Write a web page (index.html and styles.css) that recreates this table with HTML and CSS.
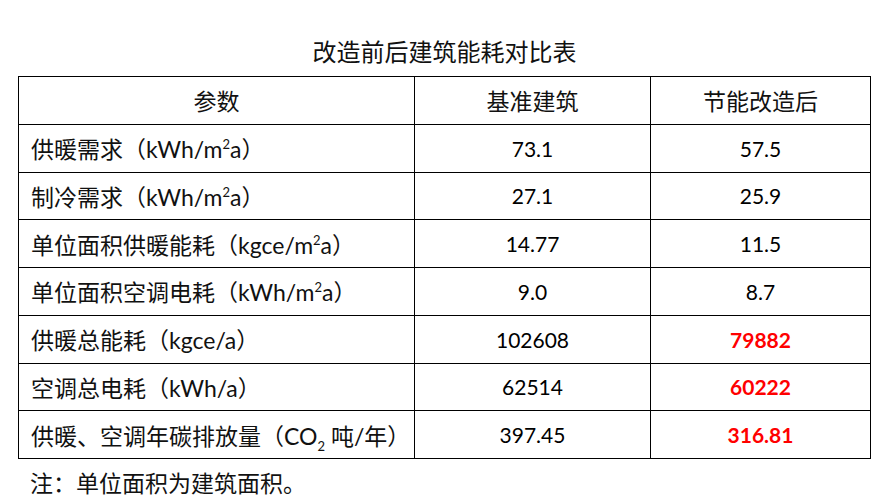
FILE: index.html
```html
<!DOCTYPE html>
<html>
<head>
  <meta charset="utf-8">
  <title>改造前后建筑能耗对比表</title>
  <link rel="stylesheet" href="styles.css">
</head>
<body>
  <div class="sheet">
    <div class="caption">改造前后建筑能耗对比表</div>
    <table class="energy">
      <colgroup>
        <col class="c-param">
        <col class="c-base">
        <col class="c-after">
      </colgroup>
      <thead>
        <tr>
          <th>参数</th>
          <th>基准建筑</th>
          <th>节能改造后</th>
        </tr>
      </thead>
      <tbody>
        <tr>
          <td class="name">供暖需求（kWh/m<sup>2</sup>a）</td>
          <td>73.1</td>
          <td>57.5</td>
        </tr>
        <tr>
          <td class="name">制冷需求（kWh/m<sup>2</sup>a）</td>
          <td>27.1</td>
          <td>25.9</td>
        </tr>
        <tr>
          <td class="name">单位面积供暖能耗（kgce/m<sup>2</sup>a）</td>
          <td>14.77</td>
          <td>11.5</td>
        </tr>
        <tr>
          <td class="name">单位面积空调电耗（kWh/m<sup>2</sup>a）</td>
          <td>9.0</td>
          <td>8.7</td>
        </tr>
        <tr>
          <td class="name">供暖总能耗（kgce/a）</td>
          <td>102608</td>
          <td class="hl">79882</td>
        </tr>
        <tr>
          <td class="name">空调总电耗（kWh/a）</td>
          <td>62514</td>
          <td class="hl">60222</td>
        </tr>
        <tr>
          <td class="name">供暖、空调年碳排放量（CO<sub>2</sub> 吨/年）</td>
          <td>397.45</td>
          <td class="hl">316.81</td>
        </tr>
      </tbody>
    </table>
    <div class="note">注：单位面积为建筑面积。</div>
  </div>
</body>
</html>
```

FILE: styles.css
```css
body {
  margin: 0;
  background: #fff;
  color: #000;
  font-family: Lato, "Noto Sans CJK SC", sans-serif;
}

.sheet {
  width: 853px;
  padding: 36px 0 0 18px;
}

.caption {
  text-align: center;
  font-size: 24px;
  line-height: 32px;
  height: 40px;
  color: #111;
}

.energy {
  width: 853px;
  table-layout: fixed;
  border-collapse: collapse;
  font-size: 21px;
}

.energy .c-param {
  width: 396px;
}

.energy .c-base {
  width: 236px;
}

.energy th,
.energy td {
  border: 1px solid #000;
  height: 46.75px;
  padding: 0 12px;
  text-align: center;
  font-weight: normal;
  white-space: nowrap;
}

.energy th {
  font-size: 23px;
  color: #111;
}

.energy td.name {
  text-align: left;
  font-size: 23px;
  color: #111;
}

.energy td.hl {
  color: #ff0000;
  font-weight: bold;
}

.energy sup,
.energy sub {
  font-size: 13px;
  line-height: 0;
}

.note {
  font-size: 23px;
  line-height: 30px;
  padding: 9px 0 0 12px;
  color: #111;
}
```
